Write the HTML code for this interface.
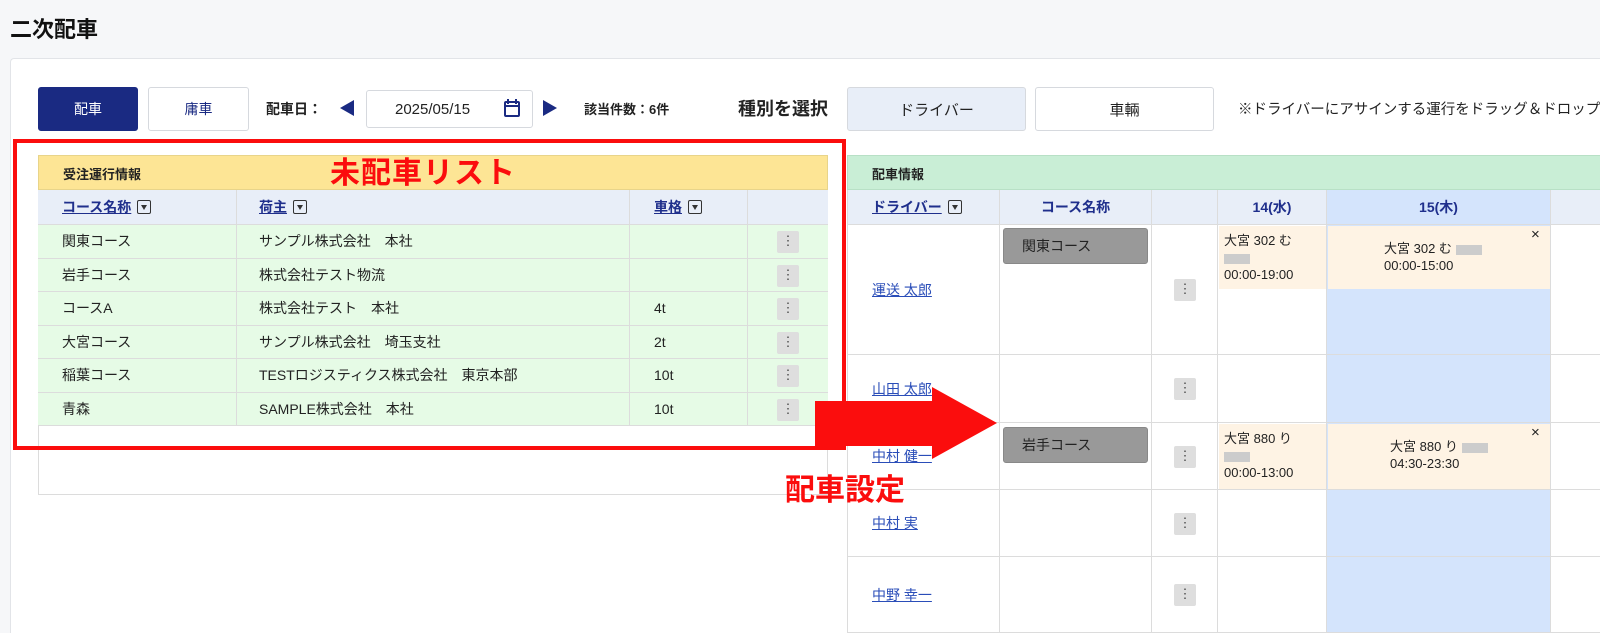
<!DOCTYPE html><html><head><meta charset="utf-8"><style>
*{box-sizing:border-box;margin:0;padding:0}
html,body{width:1600px;height:633px;overflow:hidden}
body{background:#f6f7f9;font-family:"Liberation Sans","Noto Sans CJK JP",sans-serif;font-size:14px;color:#222;position:relative}
.a{position:absolute}
.btn{position:absolute;border:1px solid #d6d9de;border-radius:3px;background:#fff;display:flex;align-items:center;justify-content:center;font-size:14px}
.cell{position:absolute;border-right:1px solid #dcdcdc;border-bottom:1px solid #dcdcdc;display:flex;align-items:center;font-size:14px}
.dots{position:absolute;width:22px;height:22px;background:#dedede;border-radius:2px;text-align:center;line-height:20px;font-size:13px;color:#444}
.lnk{color:#1f2f8c;text-decoration:underline;font-weight:bold}
.dd{display:inline-block;width:14px;height:14px;border:1px solid #333;border-radius:2px;margin-left:6px;vertical-align:-2px;position:relative}
.dd:after{content:"";position:absolute;left:3px;top:4px;border-left:3px solid transparent;border-right:3px solid transparent;border-top:5px solid #333}
.drv{color:#2a4db8;text-decoration:underline;font-size:14px}
.bl{background:#ccc;display:inline-block;width:26px;height:10px;vertical-align:middle}
</style></head><body>
<div class="a" style="left:10px;top:12px;font-size:22px;font-weight:bold;color:#111">二次配車</div>
<div class="a" style="left:10px;top:58px;width:1590px;height:575px;background:#fff;border:1px solid #e2e4e8;border-right:0;border-bottom:0;border-radius:4px 0 0 0"></div>

<div class="btn" style="left:38px;top:87px;width:100px;height:44px;background:#1a2a82;color:#fff;border-color:#1a2a82">配車</div>
<div class="btn" style="left:148px;top:87px;width:101px;height:44px;color:#1a2a82">庸車</div>
<div class="a" style="left:266px;top:99px;font-weight:bold;font-size:14px">配車日：</div>
<div class="a" style="left:340px;top:100px;width:0;height:0;border-top:8px solid transparent;border-bottom:8px solid transparent;border-right:14px solid #1a2a82"></div>
<div class="btn" style="left:366px;top:90px;width:167px;height:38px;justify-content:flex-start;padding-left:28px;font-size:15px">2025/05/15</div>
<svg class="a" style="left:503px;top:98px" width="18" height="20" viewBox="0 0 18 20"><rect x="2" y="4" width="14" height="14" rx="1" fill="none" stroke="#1a2a82" stroke-width="2"/><line x1="2" y1="8" x2="16" y2="8" stroke="#1a2a82" stroke-width="2"/><line x1="5" y1="1" x2="5" y2="6" stroke="#1a2a82" stroke-width="2"/><line x1="13" y1="1" x2="13" y2="6" stroke="#1a2a82" stroke-width="2"/></svg>
<div class="a" style="left:543px;top:100px;width:0;height:0;border-top:8px solid transparent;border-bottom:8px solid transparent;border-left:14px solid #1a2a82"></div>
<div class="a" style="left:584px;top:99px;font-weight:bold;font-size:13px">該当件数：6件</div>
<div class="a" style="left:738px;top:95px;font-weight:bold;font-size:18px">種別を選択</div>
<div class="btn" style="left:847px;top:87px;width:179px;height:44px;background:#e8eef8;font-size:15px">ドライバー</div>
<div class="btn" style="left:1035px;top:87px;width:179px;height:44px;font-size:15px">車輛</div>
<div class="a" style="left:1238px;top:98px;width:362px;overflow:hidden;font-size:14.5px;white-space:nowrap">※ドライバーにアサインする運行をドラッグ＆ドロップしてください</div>

<!-- left table -->
<div class="a" style="left:38px;top:155px;width:790px;height:340px;border:1px solid #dcdcdc;background:#fff"></div>
<div class="a" style="left:38px;top:155px;width:790px;height:35px;background:#fde595;border:1px solid #e8d48a;font-weight:bold;font-size:13px;padding:8px 0 0 24px">受注運行情報</div>
<div class="a" style="left:38px;top:190px;width:790px;height:35px;background:#e8eef8"></div>
<div class="cell" style="left:38px;top:190px;width:199px;height:35px;padding-left:24px"><span class="lnk">コース名称</span><span class="dd"></span></div>
<div class="cell" style="left:237px;top:190px;width:393px;height:35px;padding-left:22px"><span class="lnk">荷主</span><span class="dd"></span></div>
<div class="cell" style="left:630px;top:190px;width:118px;height:35px;padding-left:24px"><span class="lnk">車格</span><span class="dd"></span></div>
<div class="cell" style="left:748px;top:190px;width:80px;height:35px;border-right:0"></div>
<div class="a" style="left:38px;top:225px;width:790px;height:201px;background:#e6fbe6"></div>
<div id="rows"></div>
<script>
var d=[["関東コース","サンプル株式会社　本社",""],["岩手コース","株式会社テスト物流",""],["コースA","株式会社テスト　本社","4t"],["大宮コース","サンプル株式会社　埼玉支社","2t"],["稲葉コース","TESTロジスティクス株式会社　東京本部","10t"],["青森","SAMPLE株式会社　本社","10t"]];
var h="";d.forEach(function(r,i){var t=225+i*33.5;
h+='<div class="cell" style="left:38px;top:'+t+'px;width:199px;height:33.5px;padding-left:24px">'+r[0]+'</div>';
h+='<div class="cell" style="left:237px;top:'+t+'px;width:393px;height:33.5px;padding-left:22px">'+r[1]+'</div>';
h+='<div class="cell" style="left:630px;top:'+t+'px;width:118px;height:33.5px;padding-left:24px">'+r[2]+'</div>';
h+='<div class="cell" style="left:748px;top:'+t+'px;width:80px;height:33.5px;border-right:0"></div>';
h+='<div class="dots" style="left:777px;top:'+(t+6)+'px">⋮</div>';});
document.getElementById("rows").innerHTML=h;
</script>

<!-- right table -->
<div class="a" style="left:847px;top:155px;width:753px;height:35px;background:#c9eed6;border:1px solid #b8e0c6;border-right:0;font-weight:bold;font-size:13px;padding:8px 0 0 24px">配車情報</div>
<div class="a" style="left:847px;top:190px;width:753px;height:35px;background:#e8eef8"></div>
<div class="a" style="left:1327px;top:190px;width:224px;height:443px;background:#d4e4fc"></div>
<div class="cell" style="left:847px;top:190px;width:153px;height:35px;padding-left:24px;border-left:1px solid #dcdcdc"><span class="lnk">ドライバー</span><span class="dd"></span></div>
<div class="cell" style="left:1000px;top:190px;width:152px;height:35px;justify-content:center;font-weight:bold;color:#1f2f8c">コース名称</div>
<div class="cell" style="left:1152px;top:190px;width:66px;height:35px"></div>
<div class="cell" style="left:1218px;top:190px;width:109px;height:35px;justify-content:center;font-weight:bold;color:#1f2f8c">14(水)</div>
<div class="cell" style="left:1327px;top:190px;width:224px;height:35px;justify-content:center;font-weight:bold;color:#1f2f8c">15(木)</div>
<div class="cell" style="left:1551px;top:190px;width:49px;height:35px;border-right:0"></div>
<div id="rr"></div>
<script>
var ro=[[225,130,"運送 太郎"],[355,68,"山田 太郎"],[423,67,"中村 健一"],[490,67,"中村 実"],[557,76,"中野 幸一"]];
var h2="";ro.forEach(function(r){var t=r[0],hh=r[1];if(t+hh>633)hh=633-t;
h2+='<div class="cell" style="left:847px;top:'+t+'px;width:153px;height:'+hh+'px;padding-left:24px;border-left:1px solid #dcdcdc"><span class="drv">'+r[2]+'</span></div>';
h2+='<div class="cell" style="left:1000px;top:'+t+'px;width:152px;height:'+hh+'px"></div>';
h2+='<div class="cell" style="left:1152px;top:'+t+'px;width:66px;height:'+hh+'px"></div>';
h2+='<div class="cell" style="left:1218px;top:'+t+'px;width:109px;height:'+hh+'px"></div>';
h2+='<div class="cell" style="left:1327px;top:'+t+'px;width:224px;height:'+hh+'px"></div>';
h2+='<div class="cell" style="left:1551px;top:'+t+'px;width:49px;height:'+hh+'px;border-right:0"></div>';
h2+='<div class="dots" style="left:1174px;top:'+(r[0]+r[1]/2-11)+'px">⋮</div>';});
document.getElementById("rr").innerHTML=h2;
</script>
<div class="a" style="left:1003px;top:228px;width:145px;height:36px;background:#999;border-radius:3px;border:1px solid #888;padding:7px 0 0 18px;font-size:14px">関東コース</div>
<div class="a" style="left:1003px;top:427px;width:145px;height:36px;background:#999;border-radius:3px;border:1px solid #888;padding:7px 0 0 18px;font-size:14px">岩手コース</div>
<div class="a" style="left:1219px;top:226px;width:107px;height:63px;background:#fef3e4;padding:6px 0 0 5px;font-size:13px;line-height:17px">大宮 302 む<br><span class="bl"></span><br>00:00-19:00</div>
<div class="a" style="left:1328px;top:226px;width:222px;height:63px;background:#fef3e4;padding:14px 0 0 56px;font-size:13px;line-height:17px">大宮 302 む <span class="bl"></span><br>00:00-15:00</div>
<div class="a" style="left:1531px;top:226px;font-size:15px">×</div>
<div class="a" style="left:1219px;top:424px;width:107px;height:65px;background:#fef3e4;padding:6px 0 0 5px;font-size:13px;line-height:17px">大宮 880 り<br><span class="bl"></span><br>00:00-13:00</div>
<div class="a" style="left:1328px;top:424px;width:222px;height:65px;background:#fef3e4;padding:14px 0 0 62px;font-size:13px;line-height:17px">大宮 880 り <span class="bl"></span><br>04:30-23:30</div>
<div class="a" style="left:1531px;top:424px;font-size:15px">×</div>

<!-- annotations -->
<div class="a" style="left:13px;top:139px;width:833px;height:311px;border:4px solid #fb0d0d"></div>
<div class="a" style="left:330px;top:148px;font-size:30px;font-weight:bold;color:#fb0d0d;letter-spacing:1px">未配車リスト</div>
<svg class="a" style="left:815px;top:385px" width="185" height="80"><polygon points="0,16 117,16 117,2 182,38 117,74 117,61 0,61" fill="#fb0d0d"/></svg>
<div class="a" style="left:785px;top:465px;font-size:30px;font-weight:bold;color:#fb0d0d">配車設定</div>
</body></html>
